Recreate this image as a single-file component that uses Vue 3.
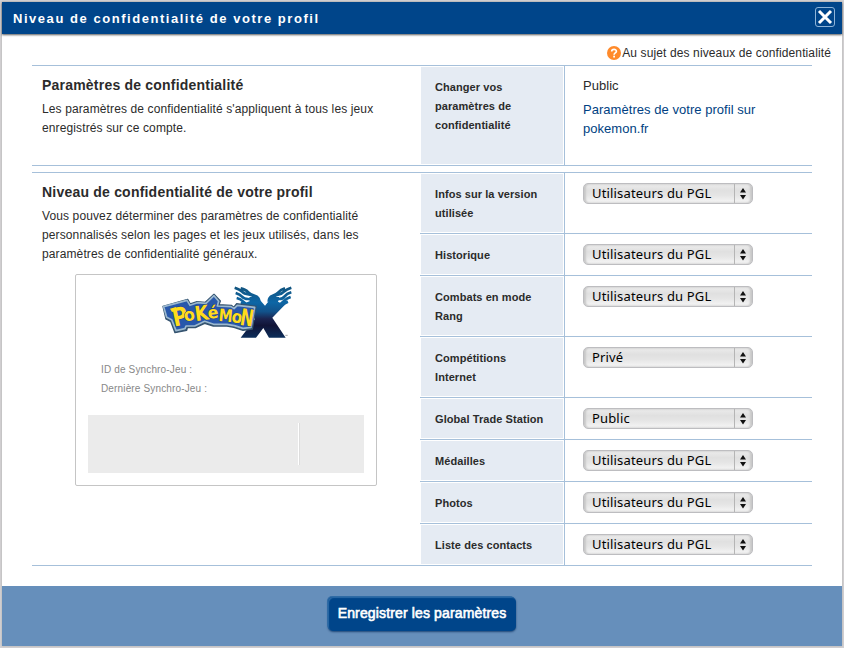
<script setup>
const title = 'Niveau de confidentialité de votre profil'

const settings = [
  { label: 'Infos sur la version utilisée', value: 'Utilisateurs du PGL' },
  { label: 'Historique', value: 'Utilisateurs du PGL' },
  { label: 'Combats en mode Rang', value: 'Utilisateurs du PGL' },
  { label: 'Compétitions Internet', value: 'Privé' },
  { label: 'Global Trade Station', value: 'Public' },
  { label: 'Médailles', value: 'Utilisateurs du PGL' },
  { label: 'Photos', value: 'Utilisateurs du PGL' },
  { label: 'Liste des contacts', value: 'Utilisateurs du PGL' },
]

const logoLetters = [
  { c: 'P', x: 73, y: 155, size: 76, rot: -12, w: 46 },
  { c: 'o', x: 105, y: 140, size: 52, rot: -12, w: 33 },
  { c: 'K', x: 137, y: 139, size: 62, rot: -8, w: 42 },
  { c: 'é', x: 175, y: 131, size: 50, rot: -6, w: 32 },
  { c: 'M', x: 205, y: 138, size: 52, rot: 5, w: 42 },
  { c: 'o', x: 243, y: 141, size: 52, rot: 8, w: 32 },
  { c: 'N', x: 268, y: 149, size: 70, rot: 9, w: 40 },
]
</script>

<template>
  <div class="page">
    <div class="dialog">
      <header class="bar">
        <h1>{{ title }}</h1>
        <button class="close" aria-label="Fermer">
          <svg width="20" height="20" viewBox="0 0 20 20">
            <rect x="0.5" y="0.5" width="19" height="19" rx="2.5" fill="none" stroke="#8eb4d8" />
            <path d="M4 4 L16 16 M16 4 L4 16" stroke="#fff" stroke-width="3" />
          </svg>
        </button>
      </header>

      <main>
        <div class="help">
          <svg width="14" height="14" viewBox="0 0 14 14">
            <circle cx="7" cy="7" r="7" fill="#ff8a2b" />
            <path d="M4.7 5.5 C4.7 2.7 9.4 2.7 9.4 5.3 C9.4 7 7.1 6.8 7.1 8.7" fill="none" stroke="#fff" stroke-width="1.7" />
            <rect x="6.2" y="9.7" width="1.8" height="1.8" fill="#fff" />
          </svg>
          <span>Au sujet des niveaux de confidentialité</span>
        </div>

        <section class="block general">
          <div class="intro">
            <h2>Paramètres de confidentialité</h2>
            <p>Les paramètres de confidentialité s'appliquent à tous les jeux<br>enregistrés sur ce compte.</p>
          </div>
          <div class="rows">
            <div class="row">
              <div class="label">Changer vos paramètres de confidentialité</div>
              <div class="value">
                <div>Public</div>
                <a class="link">Paramètres de votre profil sur pokemon.fr</a>
              </div>
            </div>
          </div>
        </section>

        <section class="block">
          <div class="intro">
            <h2>{{ title }}</h2>
            <p>Vous pouvez déterminer des paramètres de confidentialité<br>personnalisés selon les pages et les jeux utilisés, dans les<br>paramètres de confidentialité généraux.</p>
            <div class="card">
              <svg class="logo" width="160" height="75" viewBox="0 0 480 225">
                <defs>
                  <linearGradient id="xg" gradientUnits="userSpaceOnUse" x1="0" y1="36" x2="0" y2="190">
                    <stop offset="0" stop-color="#11547f" />
                    <stop offset="0.3" stop-color="#0d66a5" />
                    <stop offset="0.48" stop-color="#12528a" />
                    <stop offset="0.62" stop-color="#1b2450" />
                    <stop offset="0.75" stop-color="#111437" />
                    <stop offset="1" stop-color="#0c2f5c" />
                  </linearGradient>
                </defs>
                <path fill="url(#xg)" d="M280 86 L300 78 L298 66 L322 66 L345 92 L366 66 L388 66 L384 80 L404 90 L367 128 L407 188 L357 188 L340 159 L318 188 L272 188 L315 132 Z" />
                <path
                  d="M254 38 Q270 43 276 50 T296 58 T320 74 M272 40 Q288 44 294 51 T314 62 T328 80 M257 54 Q270 58 276 65 T294 72 T312 90 M260 69 Q272 72 280 80 T306 100 M272 84 Q284 86 300 104 M424 38 Q408 43 402 50 T384 59 T362 78 M405 40 Q392 44 386 51 T368 62 T356 80 M424 52 Q410 56 404 64 T388 72 T370 90 M422 66 Q410 70 402 78 T378 98 M414 80 Q402 84 384 102"
                  fill="none" stroke="url(#xg)" stroke-width="8"
                />
                <path d="M39 94 L113 73 L121 87 L141 80 L166 82 L192 58 L211 78 L207 89 L244 91 L251 97 L260 86 L318 94 L307 162 L279 166 L252 157 L231 153 L190 153 L164 145 L136 158 L112 158 L110 166 L75 173 L62 139 L48 132 Z" fill="#34536f" stroke="#34536f" stroke-width="4" stroke-linejoin="round" />
                <path d="M41 95 L111 76 L120 91 L142 83 L168 85 L192 62 L206 79 L202 93 L243 95 L252 101 L262 91 L314 97 L303 157 L279 160 L253 152 L231 148 L191 148 L164 139 L134 153 L108 153 L105 161 L78 167 L65 134 L50 127 Z" fill="#2858ab" stroke="#9bb8cf" stroke-width="5" stroke-linejoin="round" />
                <g class="letters">
                  <text
                    v-for="(l, i) in logoLetters"
                    :key="i"
                    :x="l.x"
                    :y="l.y"
                    :font-size="l.size"
                    :textLength="l.w"
                    lengthAdjust="spacingAndGlyphs"
                    :transform="`rotate(${l.rot} ${l.x} ${l.y})`"
                  >{{ l.c }}</text>
                </g>
                <path d="M60 101 L78 96 L78 108 L66 111 Z" fill="#ffdc1b" />
                <path d="M406 181 h7" stroke="#777" stroke-width="2" />
              </svg>
              <div class="sync">
                <div>ID de Synchro-Jeu :</div>
                <div>Dernière Synchro-Jeu :</div>
              </div>
              <div class="panel"><i></i></div>
            </div>
          </div>
          <div class="rows">
            <div v-for="s in settings" :key="s.label" class="row">
              <div class="label">{{ s.label }}</div>
              <div class="value">
                <button class="select">
                  <span>{{ s.value }}</span>
                  <svg width="18" height="19" viewBox="0 0 18 19">
                    <path d="M0.5 0 V19" stroke="#b5b5b5" />
                    <path d="M6 8.5 L9 4 L12 8.5 Z M6 11 L9 15.5 L12 11 Z" fill="#111" />
                  </svg>
                </button>
              </div>
            </div>
          </div>
        </section>
      </main>

      <footer>
        <button class="save">Enregistrer les paramètres</button>
      </footer>
    </div>
  </div>
</template>

<style>
body { margin: 0; }
</style>

<style scoped>
* { box-sizing: border-box; }
.page {
  width: 844px;
  height: 648px;
  padding: 2px;
  background: #d3d1d3;
  overflow: hidden;
  font-family: "Liberation Sans", Arial, sans-serif;
  font-size: 12px;
  line-height: 19px;
  letter-spacing: 0.12px;
  color: #2b2b2b;
}
.dialog {
  display: flex;
  flex-direction: column;
  width: 840px;
  height: 644px;
  background: #fff;
  box-shadow: 0 0 2px #aaa;
}
h1, h2, p { margin: 0; }
button { font-family: inherit; margin: 0; padding: 0; border: 0; background: none; }
.bar {
  display: flex;
  align-items: center;
  justify-content: space-between;
  height: 32px;
  padding: 0 7px 0 11px;
  background: #00458a;
  box-shadow: 0 1px 2px rgba(0, 0, 0, 0.65);
}
h1 { font-size: 13px; letter-spacing: 1.54px; color: #fff; }
.close { height: 20px; margin-top: -2px; }
.close svg, .help svg, .select svg { display: block; }
main { flex: 1; padding: 9px 30px 0; }
.help {
  display: flex;
  align-items: center;
  justify-content: flex-end;
  gap: 1px;
  height: 19px;
  margin: 0 -19px 3px 0;
}
.help span { padding-top: 2px; }
.block {
  display: grid;
  grid-template-columns: 388px 392px;
  border-top: 1px solid #a6c0da;
}
.general { border-bottom: 1px solid #a6c0da; margin-bottom: 6px; }
.intro { padding: 10px 0 0 10px; }
h2 { font-size: 14px; letter-spacing: 0.21px; margin-bottom: 5px; line-height: 19px; }
.row {
  display: grid;
  grid-template-columns: 145px 247px;
  border-bottom: 1px solid #a6c0da;
}
.general .row { height: 99px; border-bottom: 0; }
.label {
  padding: 12px 20px 10px 15px;
  border-right: 1px solid #a6c0da;
  background: #e5ebf3;
  background-clip: padding-box;
  box-shadow: inset 1px 1px #fff, inset -1px -1px #fff;
  font-size: 11px;
  font-weight: bold;
  letter-spacing: 0.07px;
}
.value { padding: 10px 40px 0 18px; font-size: 13px; letter-spacing: 0.04px; }
.link { display: block; margin-top: 5px; color: #003f82; }
.block:last-child .intro { border-bottom: 1px solid #a6c0da; }
.select {
  display: flex;
  align-items: center;
  justify-content: space-between;
  width: 170px;
  height: 21px;
  padding: 0 0 0 8px;
  border: 1px solid #bdbdc0;
  border-radius: 5px;
  background: linear-gradient(#ececec, #e0e0e0 35%, #e5e5e5 60%, #f6f6f6);
  box-shadow: inset 2px 0 2px #c8c8c8, inset -2px 0 2px #c8c8c8;
  font-family: "Noto Sans", "Open Sans", sans-serif;
  font-size: 13px;
  line-height: 19px;
  letter-spacing: 0.16px;
  color: #000;
}
.card {
  width: 302px;
  height: 212px;
  margin: 10px 0 0 33px;
  border: 1px solid #c5c5c5;
  border-radius: 2px;
}
.logo { display: block; margin-left: 74px; }
.letters text {
  font-family: "DejaVu Sans", sans-serif;
  font-weight: bold;
  fill: #ffdc1b;
  stroke: #20408a;
  stroke-width: 3px;
  paint-order: stroke;
  letter-spacing: 0;
}
.sync { padding: 10px 0 0 25px; font-size: 10px; letter-spacing: 0.15px; color: #888; }
.panel { width: 276px; height: 58px; margin: 17px 0 0 12px; padding: 8px 0 0 210px; background: #ebebeb; }
.panel i { display: block; width: 2px; height: 42px; background: #fff; border-right: 1px solid #ddd; }
footer {
  display: flex;
  justify-content: center;
  height: 60px;
  padding-top: 11px;
  background: #668fbb;
}
.save {
  width: 188px;
  height: 34px;
  padding-bottom: 2px;
  border-radius: 5px;
  background: #00458a;
  box-shadow: inset 1px 1px 1px #2b6aa6, -1px -1px 0 #2f6ba5, 0 1px 2px rgba(0, 40, 90, 0.7);
  font-size: 14px;
  letter-spacing: 0.14px;
  color: #fff;
  -webkit-text-stroke: 0.6px #fff;
}
</style>
